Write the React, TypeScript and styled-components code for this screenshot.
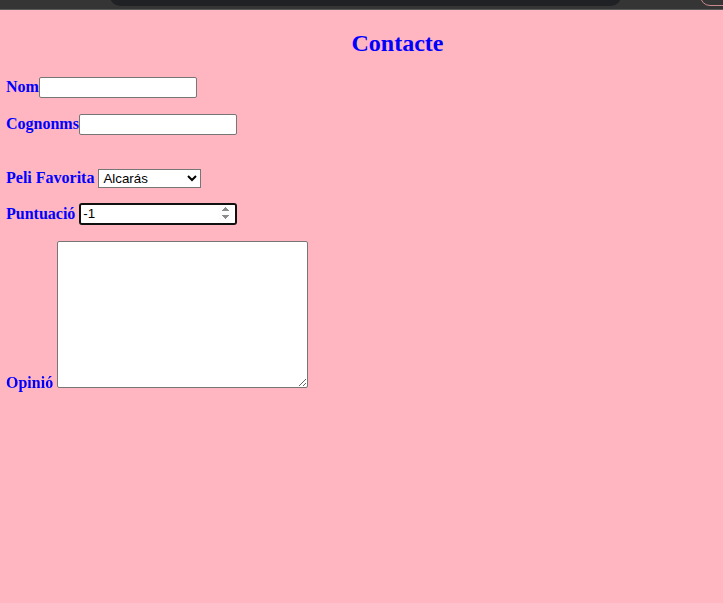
import React from "react";
import styled, { createGlobalStyle } from "styled-components";

const Global = createGlobalStyle`
  html, body { margin: 0; padding: 0; }
  body {
    background: #ffb6c1;
    font-family: "Liberation Serif", "Times New Roman", serif;
    min-height: 603px;
    overflow: hidden;
  }
`;

const ChromeBar = styled.div`
  height: 9px;
  background: #353535;
  border-bottom: 1px solid #5a5a5a;
  position: relative;
  overflow: hidden;
`;

const Omnibox = styled.div`
  position: absolute;
  left: 110px;
  right: 102px;
  top: -20px;
  height: 26px;
  background: #202124;
  border-radius: 10px;
`;

const CornerButton = styled.div`
  position: absolute;
  left: 700px;
  top: -20px;
  width: 60px;
  height: 24px;
  border: 1px solid #c98a8f;
  border-radius: 10px;
`;

const Page = styled.div`
  padding: 0 6px;
  display: flow-root;
`;

const Title = styled.h2`
  color: #0000ff;
  font-size: 24px;
  font-weight: bold;
  text-align: center;
  margin: 19.92px 0;
  padding-left: 72px;
`;

const Row = styled.p<{ $gap?: number }>`
  margin: ${(p) => p.$gap ?? 16}px 0 0;
  color: #0000ff;
  font-size: 16px;
  font-weight: bold;
`;

const Label = styled.label`
  color: #0000ff;
`;

const TextInput = styled.input`
  font-family: "Liberation Sans", Arial, sans-serif;
  font-size: 13.333px;
  box-sizing: border-box;
  width: 158px;
  height: 21px;
  padding: 1px 2px;
  border: 1px solid #767676;
  border-radius: 2px;
  background: #fff;
  vertical-align: baseline;
`;

const NumberInput = styled(TextInput)`
  height: 22px;
  border: 2px solid #101010;
  border-radius: 3px;
  outline: 1px solid #ffffff;
  outline-offset: -3px;
  padding: 1px 2px;
  color: #000;
  &:focus { outline: 1px solid #ffffff; }
`;

const Select = styled.select`
  font-family: "Liberation Sans", Arial, sans-serif;
  font-size: 13.333px;
  width: 103px;
  height: 19px;
  border: 1px solid #767676;
  border-radius: 0;
  background: #fff;
  color: #000;
`;

const TextArea = styled.textarea`
  box-sizing: border-box;
  width: 251px;
  height: 147px;
  border: 1px solid #767676;
  border-radius: 2px;
  padding: 2px;
  background: #fff;
  vertical-align: baseline;
  font-family: "Liberation Mono", monospace;
  font-size: 13.333px;
`;

export default function App() {
  return (
    <>
      <Global />
      <ChromeBar>
        <Omnibox />
        <CornerButton />
      </ChromeBar>
      <Page>
        <Title>Contacte</Title>
        <form onSubmit={(e) => e.preventDefault()}>
          <Row>
            <Label htmlFor="nom">Nom</Label>
            <TextInput id="nom" type="text" />
          </Row>
          <Row>
            <Label htmlFor="cognoms">Cognonms</Label>
            <TextInput id="cognoms" type="text" />
          </Row>
          <Row $gap={34}>
            <Label htmlFor="peli">Peli Favorita</Label>{" "}
            <Select id="peli" defaultValue="alcaras">
              <option value="alcaras">Alcarás</option>
            </Select>
          </Row>
          <Row $gap={15}>
            <Label htmlFor="punt">Puntuació</Label>{" "}
            <NumberInput id="punt" type="number" defaultValue={-1} autoFocus />
          </Row>
          <Row>
            <Label htmlFor="opinio">Opinió</Label>{" "}
            <TextArea id="opinio" />
          </Row>
        </form>
      </Page>
    </>
  );
}
